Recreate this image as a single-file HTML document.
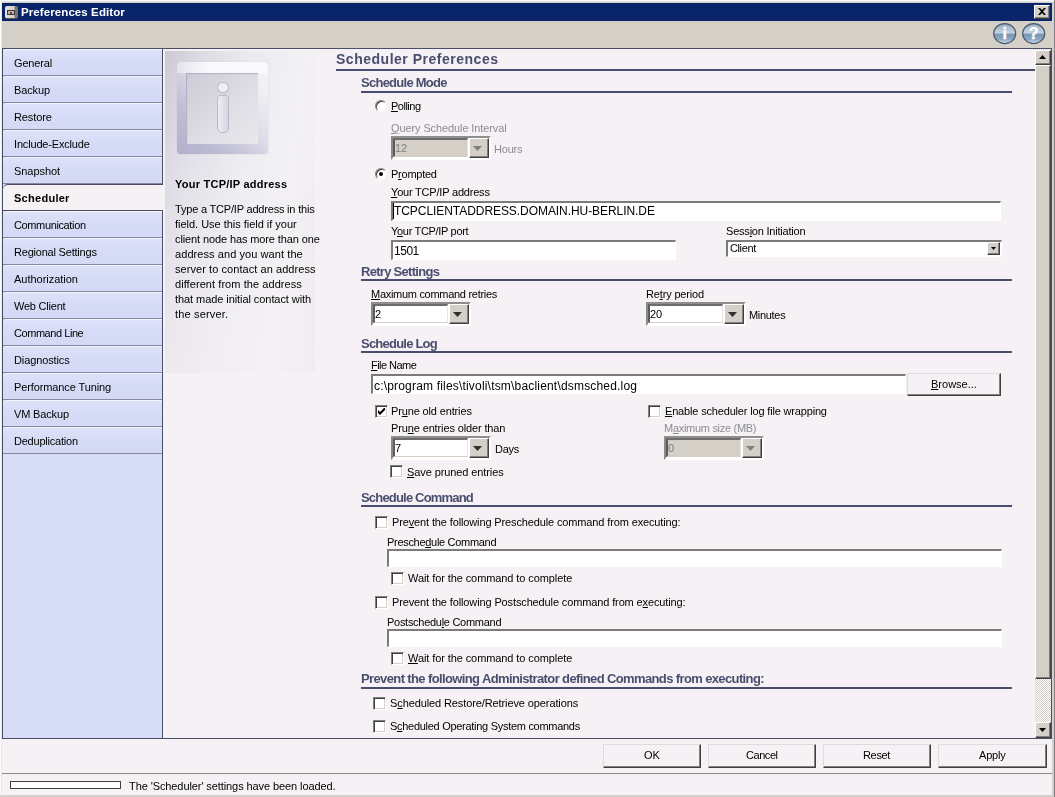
<!DOCTYPE html>
<html><head><meta charset="utf-8"><title>Preferences Editor</title>
<style>
*{box-sizing:border-box;margin:0;padding:0}
html,body{width:1055px;height:797px;overflow:hidden;background:#d4d0c8}
body{position:relative;font-family:"Liberation Sans",sans-serif;font-size:11px;color:#000}
.a{position:absolute;white-space:nowrap}
#title{left:2px;top:3px;width:1050px;height:18px;background:#0a246a}
.tt{color:#fff;font-weight:bold;font-size:11.5px;line-height:14px}
#close{left:1034px;top:5px;width:16px;height:14px;background:#d4d0c8;border:1px solid;border-color:#fff #404040 #404040 #fff;box-shadow:inset -1px -1px 0 #808080}
#main{left:2px;top:48px;width:1050px;height:691px;background:#f5f1f5;border:1px solid #4a4e68}
#side{left:3px;top:49px;width:160px;height:689px;background:#d6dcf6;border-right:1px solid #4a4e68}
.tab{left:3px;width:159px;height:27px;border-bottom:1px solid #8488a4;border-top:1px solid #f4f6fe;background:linear-gradient(#dde2f9 0%,#d6dcf6 45%,#d4daf5 100%);border-top-left-radius:5px}
.tab.sel{background:#f5f1f5;width:160px;border-bottom:1px solid #4a4e68;border-top:1px solid #4a4e68}
.h1{font-weight:bold;font-size:14px;line-height:16px;color:#4a4e6e}
.h2{font-weight:bold;font-size:13px;line-height:15px;color:#4a4e6e}
.ln{background:#4a4e6e;height:2px}
.t,.tt,.h1,.h2,.f12{will-change:transform}
.t{font-size:11px;line-height:13px}
.b{font-weight:bold}
.dis{color:#8c8c94}
.f12{font-size:12px;line-height:14px}
.in{background:#fff;border-style:solid;border-width:2px 1px 1px 2px;border-color:#7b7b7b #fff #fff #7b7b7b}
.btn{background:#f5f1f5;border:1px solid;border-color:#dddbdd #404040 #404040 #dddbdd;box-shadow:inset -1px -1px 0 #808080}
.cb{width:13px;height:13px;background:#fff;border:1px solid;border-color:#808080 #fff #fff #808080;box-shadow:inset 1px 1px 0 #404040, inset -1px -1px 0 #d4d0c8}
.rb{width:12px;height:12px;border-radius:50%;background:#fff;border:1px solid;border-color:#808080 #f8f6f8 #f8f6f8 #808080;box-shadow:inset 1px 1px 0 #404040}
.sbb{background:#d4d0c8;border:1px solid;border-color:#fff #404040 #404040 #fff;box-shadow:inset -1px -1px 0 #808080}
</style></head><body>
<div class="a" id="title"></div>
<div class="a tt" id="t1" style="left:21px;top:5px;letter-spacing:0.090px;">Preferences Editor</div>
<div class="a" style="left:5px;top:6px;width:13px;height:13px;background:linear-gradient(90deg,#e4e2de 0%,#d2cfc8 70%,#77756f 78%,#77756f 100%);border-radius:2px;border-bottom:1px solid #5a5853"><div class="a" style="left:2px;top:4px;width:8px;height:5px;background:#b9b4b0;border:1px solid #3c3c3c"><div class="a" style="left:2px;top:1px;width:2px;height:2px;background:#a03030"></div></div></div>
<div class="a" style="left:0;top:0;width:1054px;height:2px;background:linear-gradient(#fbfbfb 50%,#e2e2ee 50%)"></div><div class="a" style="left:0;top:0;width:2px;height:795px;background:linear-gradient(90deg,#fbfbfb 50%,#e6e6f0 50%)"></div><div class="a" style="left:1054px;top:0;width:1px;height:797px;background:#7c7c84"></div>
<div class="a" id="close"><svg class="a" style="left:3px;top:2px" width="8" height="7" viewBox="0 0 8 7"><path d="M0 0h2l2 2 2-2h2L5 3.5 8 7H6L4 5 2 7H0l3-3.5z" fill="#000"/></svg></div>
<svg class="a" width="0" height="0"><defs><linearGradient id="g1" x1="0" y1="0" x2="0" y2="1"><stop offset="0" stop-color="#93abc3"/><stop offset=".3" stop-color="#b4c7d8"/><stop offset=".48" stop-color="#c4d3e0"/><stop offset=".52" stop-color="#7896b3"/><stop offset=".8" stop-color="#8eaac4"/><stop offset="1" stop-color="#dbe7f0"/></linearGradient></defs></svg>
<svg class="a" style="left:993px;top:23px" width="24" height="22" viewBox="0 0 24 22"><ellipse cx="11.7" cy="10.6" rx="11" ry="10" fill="url(#g1)" stroke="#4c5a6e" stroke-width="1.2"/><text x="11.7" y="15.8" text-anchor="middle" font-family="Liberation Sans, sans-serif" font-weight="bold" font-size="16" fill="#fff" stroke="#fff" stroke-width=".4">i</text></svg>
<svg class="a" style="left:1022px;top:23px" width="24" height="22" viewBox="0 0 24 22"><ellipse cx="11.7" cy="10.6" rx="11" ry="10" fill="url(#g1)" stroke="#4c5a6e" stroke-width="1.2"/><text x="11.7" y="15.8" text-anchor="middle" font-family="Liberation Sans, sans-serif" font-weight="bold" font-size="16" fill="#fff" stroke="#fff" stroke-width=".4">?</text></svg>
<div class="a" id="main"></div>
<div class="a" id="side"></div>
<div class="a tab" style="left:3px;top:49px;"></div>
<div class="a t" id="t2" style="left:14px;top:57px;letter-spacing:-0.173px;">General</div>
<div class="a tab" style="left:3px;top:76px;"></div>
<div class="a t" id="t3" style="left:14px;top:84px;letter-spacing:-0.121px;">Backup</div>
<div class="a tab" style="left:3px;top:103px;"></div>
<div class="a t" id="t4" style="left:14px;top:111px;letter-spacing:-0.122px;">Restore</div>
<div class="a tab" style="left:3px;top:130px;"></div>
<div class="a t" id="t5" style="left:14px;top:138px;letter-spacing:-0.170px;">Include-Exclude</div>
<div class="a tab" style="left:3px;top:157px;"></div>
<div class="a t" id="t6" style="left:14px;top:165px;letter-spacing:-0.055px;">Snapshot</div>
<div class="a tab sel" style="left:3px;top:184px;"></div>
<div class="a t b" id="t7" style="left:14px;top:192px;letter-spacing:0.277px;">Scheduler</div>
<div class="a tab" style="left:3px;top:211px;"></div>
<div class="a t" id="t8" style="left:14px;top:219px;letter-spacing:-0.368px;">Communication</div>
<div class="a tab" style="left:3px;top:238px;"></div>
<div class="a t" id="t9" style="left:14px;top:246px;letter-spacing:-0.208px;">Regional Settings</div>
<div class="a tab" style="left:3px;top:265px;"></div>
<div class="a t" id="t10" style="left:14px;top:273px;letter-spacing:-0.018px;">Authorization</div>
<div class="a tab" style="left:3px;top:292px;"></div>
<div class="a t" id="t11" style="left:14px;top:300px;letter-spacing:-0.223px;">Web Client</div>
<div class="a tab" style="left:3px;top:319px;"></div>
<div class="a t" id="t12" style="left:14px;top:327px;letter-spacing:-0.445px;">Command Line</div>
<div class="a tab" style="left:3px;top:346px;"></div>
<div class="a t" id="t13" style="left:14px;top:354px;letter-spacing:-0.116px;">Diagnostics</div>
<div class="a tab" style="left:3px;top:373px;"></div>
<div class="a t" id="t14" style="left:14px;top:381px;letter-spacing:-0.115px;">Performance Tuning</div>
<div class="a tab" style="left:3px;top:400px;"></div>
<div class="a t" id="t15" style="left:14px;top:408px;letter-spacing:-0.156px;">VM Backup</div>
<div class="a tab" style="left:3px;top:427px;"></div>
<div class="a t" id="t16" style="left:14px;top:435px;letter-spacing:-0.221px;">Deduplication</div>
<div class="a " style="left:165px;top:51px;width:150px;height:322px;background:linear-gradient(180deg,rgba(245,241,245,0) 0%,rgba(245,241,245,.3) 40%,rgba(245,241,245,.6) 100%),linear-gradient(97deg,#cac9d5 0%,#dddce4 20%,#ebeaef 45%,#f3f1f4 75%,#eae8ed 100%)"></div>
<div class="a" style="left:177px;top:62px;width:91px;height:92px;border-radius:4px;background:linear-gradient(90deg,#e4e3ee 0%,#fafafc 35%,#fafafc 100%) 0 0/100% 11px no-repeat,linear-gradient(45deg,#b0aeca 0%,#c2c0d6 30%,#dddce8 55%,#efeef4 80%,#f4f4f8 100%);box-shadow:0 0 1px #aeacc2"></div>
<div class="a" style="left:186px;top:73px;width:72px;height:71px;background:linear-gradient(135deg,#cccbd6,#dddce4 50%,#e9e8ed);box-shadow:inset 1px 1px 1px #b0afc0"></div>
<div class="a" style="left:217px;top:82px;width:12px;height:11px;border-radius:50%;background:#efeef3;border:1px solid #b9b7cb"></div>
<div class="a" style="left:217px;top:95px;width:12px;height:38px;border-radius:3px 3px 5px 5px;background:linear-gradient(90deg,#eeedf3,#d6d5e0);border:1px solid #b9b7cb"></div>
<div class="a t b" id="t17" style="left:175px;top:178px;letter-spacing:0.239px;">Your TCP/IP address</div>
<div class="a t" id="t18" style="left:175px;top:203px;letter-spacing:-0.194px;">Type a TCP/IP address in this</div>
<div class="a t" id="t19" style="left:175px;top:218px;letter-spacing:-0.021px;">field. Use this field if your</div>
<div class="a t" id="t20" style="left:175px;top:233px;letter-spacing:-0.114px;">client node has more than one</div>
<div class="a t" id="t21" style="left:175px;top:248px;letter-spacing:0.075px;">address and you want the</div>
<div class="a t" id="t22" style="left:175px;top:263px;letter-spacing:0.063px;">server to contact an address</div>
<div class="a t" id="t23" style="left:175px;top:278px;letter-spacing:0.066px;">different from the address</div>
<div class="a t" id="t24" style="left:175px;top:293px;letter-spacing:-0.069px;">that made initial contact with</div>
<div class="a t" id="t25" style="left:175px;top:308px;letter-spacing:0.164px;">the server.</div>
<div class="a h1" id="t26" style="left:336px;top:51px;letter-spacing:0.512px;">Scheduler Preferences</div>
<div class="a ln" style="left:336px;top:69px;width:699px;height:2px;"></div>
<div class="a h2" id="t27" style="left:361px;top:75px;letter-spacing:-0.738px;">Schedule Mode</div>
<div class="a ln" style="left:361px;top:91px;width:651px;height:2px;"></div>
<div class="a rb" style="left:375px;top:100px;"></div>
<div class="a t" id="t28" style="left:391px;top:100px;letter-spacing:-0.505px;"><u>P</u>olling</div>
<div class="a t dis" id="t29" style="left:391px;top:122px;letter-spacing:-0.105px;"><u>Q</u>uery Schedule Interval</div>
<div class="a " style="left:391px;top:136px;width:100px;height:24px;border-style:solid;border-width:2px;border-color:#8e8e8e #fff #fff #8a8a8a;background:#fff"></div>
<div class="a " style="left:393px;top:138px;width:75px;height:19px;background:#d4d0c8;border-style:solid;border-width:2px 1px 1px 2px;border-color:#6c6c6c #e8e6e2 #d4d0c8 #5c5c5c"><span class="t" style="position:absolute;left:0px;top:2px;color:#808080">12</span></div>
<div class="a sbb" style="left:469px;top:138px;width:20px;height:20px;"><svg class="a" style="left:3px;top:7px" width="9" height="5" viewBox="0 0 9 5"><path d="M0 0h9L4.5 5z" fill="#808080"/></svg></div>
<div class="a t dis" id="t30" style="left:494px;top:143px;letter-spacing:-0.211px;">Hours</div>
<div class="a rb" style="left:375px;top:168px;"><div class="a" style="left:3px;top:3px;width:4px;height:4px;border-radius:50%;background:#000"></div></div>
<div class="a t" id="t31" style="left:391px;top:168px;letter-spacing:-0.246px;">P<u>r</u>ompted</div>
<div class="a t" id="t32" style="left:391px;top:186px;letter-spacing:-0.202px;"><u>Y</u>our TCP/IP address</div>
<div class="a in" style="left:391px;top:201px;width:610px;height:20px;"></div>
<div class="a " style="left:393px;top:203px;width:1px;height:16px;background:#000"></div>
<div class="a f12" id="t33" style="left:394px;top:204px;letter-spacing:-0.062px;">TCPCLIENTADDRESS.DOMAIN.HU-BERLIN.DE</div>
<div class="a t" id="t34" style="left:391px;top:225px;letter-spacing:-0.317px;">Y<u>o</u>ur TCP/IP port</div>
<div class="a t" id="t35" style="left:726px;top:225px;letter-spacing:-0.211px;">Sess<u>i</u>on Initiation</div>
<div class="a in" style="left:391px;top:240px;width:285px;height:20px;"></div>
<div class="a f12" id="t36" style="left:394px;top:244px;letter-spacing:-0.468px;">1501</div>
<div class="a in" style="left:726px;top:240px;width:276px;height:17px;"><div class="a sbb" style="right:1px;top:0px;width:13px;height:13px;"><svg class="a" style="left:3px;top:4px" width="5" height="3" viewBox="0 0 5 3"><path d="M0 0h5L2.5 3z" fill="#000"/></svg></div></div>
<div class="a t" id="t37" style="left:729.5px;top:242px;letter-spacing:-0.385px;">Client</div>
<div class="a h2" id="t38" style="left:361px;top:264px;letter-spacing:-0.711px;">Retry Settings</div>
<div class="a ln" style="left:361px;top:279px;width:651px;height:2px;"></div>
<div class="a t" id="t39" style="left:371px;top:288px;letter-spacing:-0.289px;"><u>M</u>aximum command retries</div>
<div class="a t" id="t40" style="left:646px;top:288px;letter-spacing:-0.157px;">Re<u>t</u>ry period</div>
<div class="a " style="left:371px;top:302px;width:100px;height:24px;border-style:solid;border-width:2px;border-color:#8e8e8e #fff #fff #8a8a8a;background:#fff"></div>
<div class="a " style="left:373px;top:304px;width:75px;height:19px;background:#fff;border-style:solid;border-width:2px 1px 1px 2px;border-color:#6c6c6c #e8e6e2 #d4d0c8 #5c5c5c"><span class="t" style="position:absolute;left:0px;top:2px;color:#000">2</span></div>
<div class="a sbb" style="left:449px;top:304px;width:20px;height:20px;"><svg class="a" style="left:3px;top:7px" width="9" height="5" viewBox="0 0 9 5"><path d="M0 0h9L4.5 5z" fill="#303030"/></svg></div>
<div class="a " style="left:646px;top:302px;width:100px;height:24px;border-style:solid;border-width:2px;border-color:#8e8e8e #fff #fff #8a8a8a;background:#fff"></div>
<div class="a " style="left:648px;top:304px;width:75px;height:19px;background:#fff;border-style:solid;border-width:2px 1px 1px 2px;border-color:#6c6c6c #e8e6e2 #d4d0c8 #5c5c5c"><span class="t" style="position:absolute;left:0px;top:2px;color:#000">20</span></div>
<div class="a sbb" style="left:724px;top:304px;width:20px;height:20px;"><svg class="a" style="left:3px;top:7px" width="9" height="5" viewBox="0 0 9 5"><path d="M0 0h9L4.5 5z" fill="#303030"/></svg></div>
<div class="a t" id="t41" style="left:749px;top:309px;letter-spacing:-0.305px;">Minutes</div>
<div class="a h2" id="t42" style="left:361px;top:336px;letter-spacing:-0.776px;">Schedule Log</div>
<div class="a ln" style="left:361px;top:351px;width:651px;height:2px;"></div>
<div class="a t" id="t43" style="left:371px;top:359px;letter-spacing:-0.543px;"><u>F</u>ile Name</div>
<div class="a in" style="left:371px;top:374px;width:535px;height:20px;"></div>
<div class="a f12" id="t44" style="left:373.5px;top:379px;letter-spacing:0.185px;">c:\program files\tivoli\tsm\baclient\dsmsched.log</div>
<div class="a btn" style="left:907px;top:373px;width:94px;height:23px;"></div>
<div class="a t" id="t45" style="left:931px;top:378px;letter-spacing:0.005px;"><u>B</u>rowse...</div>
<div class="a cb" style="left:375px;top:405px;"><svg class="a" style="left:2px;top:2px" width="7" height="7" viewBox="0 0 7 7"><path d="M0 2v3l2 2 5-5V-1L2 4z" fill="#000"/></svg></div>
<div class="a t" id="t46" style="left:391px;top:405px;letter-spacing:-0.142px;">Pr<u>u</u>ne old entries</div>
<div class="a cb" style="left:648px;top:405px;"></div>
<div class="a t" id="t47" style="left:664.5px;top:405px;letter-spacing:-0.169px;"><u>E</u>nable scheduler log file wrapping</div>
<div class="a t" id="t48" style="left:391px;top:422px;letter-spacing:-0.131px;">Pru<u>n</u>e entries older than</div>
<div class="a t dis" id="t49" style="left:664px;top:422px;letter-spacing:-0.293px;">M<u>a</u>ximum size (MB)</div>
<div class="a " style="left:391px;top:436px;width:100px;height:24px;border-style:solid;border-width:2px;border-color:#8e8e8e #fff #fff #8a8a8a;background:#fff"></div>
<div class="a " style="left:393px;top:438px;width:75px;height:19px;background:#fff;border-style:solid;border-width:2px 1px 1px 2px;border-color:#6c6c6c #e8e6e2 #d4d0c8 #5c5c5c"><span class="t" style="position:absolute;left:0px;top:2px;color:#000">7</span></div>
<div class="a sbb" style="left:469px;top:438px;width:20px;height:20px;"><svg class="a" style="left:3px;top:7px" width="9" height="5" viewBox="0 0 9 5"><path d="M0 0h9L4.5 5z" fill="#303030"/></svg></div>
<div class="a t" id="t50" style="left:494.5px;top:443px;letter-spacing:-0.288px;">Days</div>
<div class="a " style="left:664px;top:436px;width:100px;height:24px;border-style:solid;border-width:2px;border-color:#8e8e8e #fff #fff #8a8a8a;background:#fff"></div>
<div class="a " style="left:666px;top:438px;width:75px;height:19px;background:#d4d0c8;border-style:solid;border-width:2px 1px 1px 2px;border-color:#6c6c6c #e8e6e2 #d4d0c8 #5c5c5c"><span class="t" style="position:absolute;left:0px;top:2px;color:#808080">0</span></div>
<div class="a sbb" style="left:742px;top:438px;width:20px;height:20px;"><svg class="a" style="left:3px;top:7px" width="9" height="5" viewBox="0 0 9 5"><path d="M0 0h9L4.5 5z" fill="#808080"/></svg></div>
<div class="a cb" style="left:390px;top:465px;"></div>
<div class="a t" id="t51" style="left:407px;top:466px;letter-spacing:-0.098px;"><u>S</u>ave pruned entries</div>
<div class="a h2" id="t52" style="left:361px;top:490px;letter-spacing:-0.811px;">Schedule Command</div>
<div class="a ln" style="left:361px;top:505px;width:651px;height:2px;"></div>
<div class="a cb" style="left:375px;top:516px;"></div>
<div class="a t" id="t53" style="left:391.5px;top:516px;letter-spacing:-0.131px;">Pre<u>v</u>ent the following Preschedule command from executing:</div>
<div class="a t" id="t54" style="left:386.5px;top:536px;letter-spacing:-0.304px;">Presche<u>d</u>ule Command</div>
<div class="a in" style="left:387px;top:549px;width:615px;height:18px;"></div>
<div class="a cb" style="left:391px;top:572px;"></div>
<div class="a t" id="t55" style="left:408px;top:572px;letter-spacing:-0.091px;">Wait for the command to complete</div>
<div class="a cb" style="left:375px;top:596px;"></div>
<div class="a t" id="t56" style="left:391.5px;top:596px;letter-spacing:-0.127px;">Prevent the following Postschedule command from e<u>x</u>ecuting:</div>
<div class="a t" id="t57" style="left:386.5px;top:616px;letter-spacing:-0.282px;">Postschedu<u>l</u>e Command</div>
<div class="a in" style="left:387px;top:629px;width:615px;height:18px;"></div>
<div class="a cb" style="left:391px;top:652px;"></div>
<div class="a t" id="t58" style="left:408px;top:652px;letter-spacing:-0.091px;"><u>W</u>ait for the command to complete</div>
<div class="a h2" id="t59" style="left:361px;top:671px;letter-spacing:-0.621px;">Prevent the following Administrator defined Commands from executing:</div>
<div class="a ln" style="left:361px;top:687px;width:651px;height:2px;"></div>
<div class="a cb" style="left:373px;top:697px;"></div>
<div class="a t" id="t60" style="left:390px;top:697px;letter-spacing:-0.106px;">S<u>c</u>heduled Restore/Retrieve operations</div>
<div class="a cb" style="left:373px;top:720px;"></div>
<div class="a t" id="t61" style="left:390px;top:720px;letter-spacing:-0.287px;">S<u>c</u>heduled Operating System commands</div>
<div class="a " style="left:1035px;top:49px;width:16px;height:689px;background:repeating-conic-gradient(#fff 0 25%,#d4d0c8 0 50%) 0 0/2px 2px"></div>
<div class="a sbb" style="left:1035px;top:50px;width:16px;height:15px;"><svg class="a" style="left:3px;top:4px" width="7" height="4" viewBox="0 0 7 4"><path d="M0 4h7L3.5 0z" fill="#000"/></svg></div>
<div class="a sbb" style="left:1035px;top:65px;width:16px;height:614px;"></div>
<div class="a sbb" style="left:1035px;top:722px;width:16px;height:16px;"><svg class="a" style="left:3px;top:5px" width="7" height="4" viewBox="0 0 7 4"><path d="M0 0h7L3.5 4z" fill="#000"/></svg></div>
<div class="a " style="left:2px;top:739px;width:1050px;height:34px;background:#f5f1f5"></div>
<div class="a btn" style="left:603px;top:744px;width:98px;height:24px;"></div>
<div class="a t" id="t62" style="left:643.5px;top:749px;">OK</div>
<div class="a btn" style="left:708px;top:744px;width:108px;height:24px;"></div>
<div class="a t" id="t63" style="left:745.5px;top:749px;letter-spacing:-0.450px;">Cancel</div>
<div class="a btn" style="left:823px;top:744px;width:108px;height:24px;"></div>
<div class="a t" id="t64" style="left:862.6px;top:749px;letter-spacing:-0.338px;">Reset</div>
<div class="a btn" style="left:938px;top:744px;width:109px;height:24px;"></div>
<div class="a t" id="t65" style="left:978.6px;top:749px;letter-spacing:-0.208px;">Apply</div>
<div class="a " style="left:2px;top:773px;width:1050px;height:1px;background:#8a8a8a"></div>
<div class="a " style="left:2px;top:774px;width:1050px;height:21px;background:#f5f1f5"></div>
<div class="a " style="left:10px;top:781px;width:111px;height:8px;border:1px solid #404040;background:#fff"></div>
<div class="a t" id="t66" style="left:129px;top:780px;letter-spacing:-0.090px;">The 'Scheduler' settings have been loaded.</div>
</body></html>
